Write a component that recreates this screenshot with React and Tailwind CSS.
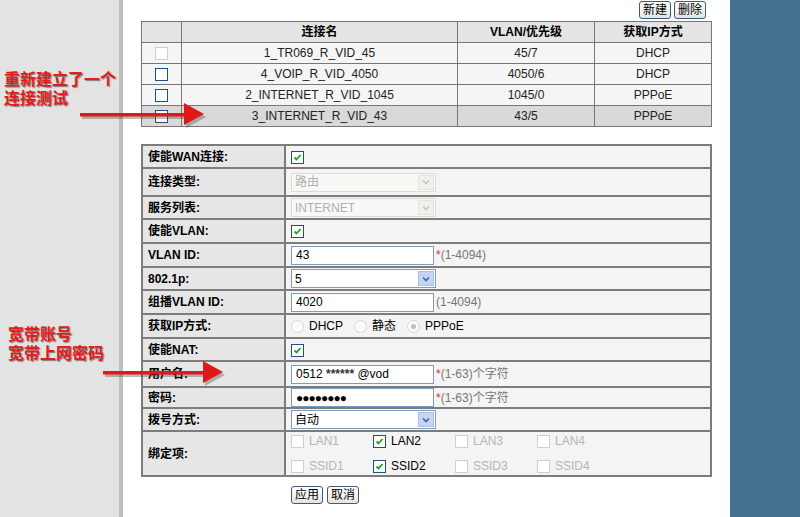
import React from 'react';

const FONT = { fontFamily: '"Liberation Sans", Arial, "Noto Sans CJK SC", sans-serif' };

const Box = ({ checked, disabled }) => (
  <span
    className={`inline-flex items-center justify-center w-[13px] h-[13px] border bg-white align-middle ${
      disabled ? 'border-[#cfcfcf]' : 'border-[#1c5180]'
    }`}
  >
    {checked && (
      <svg width="9" height="9" viewBox="0 0 9 9">
        <path d="M1.5 4.5 L3.5 6.5 L7.5 2" stroke="#21a121" strokeWidth="1.8" fill="none" />
      </svg>
    )}
  </span>
);

const Radio = ({ on }) => (
  <span className="inline-flex items-center justify-center w-[13px] h-[13px] rounded-full border border-[#d6d6d6] bg-[#fbfbfb] align-middle">
    {on && <span className="w-[5px] h-[5px] rounded-full bg-[#bdbdbd]" />}
  </span>
);

const TextInput = ({ value, w = 'w-[143px]' }) => (
  <div className={`${w} h-[19px] border border-[#7f9db9] bg-white px-[4px] flex items-center text-[12px] text-black`}>
    {value}
  </div>
);

const Select = ({ value, disabled }) => (
  <div
    className={`w-[145px] h-[19px] border flex items-stretch text-[12px] ${
      disabled ? 'border-[#dcdcd4] bg-[#f8f8f6] text-[#b0b0b0]' : 'border-[#7f9db9] bg-white text-black'
    }`}
  >
    <span className="flex-1 px-[3px] flex items-center">{value}</span>
    <span
      className={`w-[16px] m-[1px] flex items-center justify-center ${
        disabled ? 'bg-[#f0f0ec] border border-[#e4e4de]' : 'bg-[#c4d5fa] border border-[#a9bfe8]'
      }`}
    >
      <svg width="8" height="6" viewBox="0 0 8 6">
        <path d="M1 1.5 L4 4.5 L7 1.5" stroke={disabled ? '#c8c8c0' : '#4d6185'} strokeWidth="1.6" fill="none" />
      </svg>
    </span>
  </div>
);

const Btn = ({ children }) => (
  <button className="h-[18px] px-[3px] border border-[#3c5a7a] rounded-[3px] bg-gradient-to-b from-white to-[#e6e6e0] text-[12px] leading-none text-black">
    {children}
  </button>
);

const Hint = ({ star, text }) => (
  <span className="ml-[2px] text-[12px] text-[#777]">
    {star && <span className="text-[#e03030]">*</span>}
    {text}
  </span>
);

const connections = [
  { name: '1_TR069_R_VID_45', vlan: '45/7', ip: 'DHCP', disabled: true },
  { name: '4_VOIP_R_VID_4050', vlan: '4050/6', ip: 'DHCP' },
  { name: '2_INTERNET_R_VID_1045', vlan: '1045/0', ip: 'PPPoE' },
  { name: '3_INTERNET_R_VID_43', vlan: '43/5', ip: 'PPPoE', active: true },
];

const Row = ({ label, h, children }) => (
  <tr style={{ height: h }}>
    <td className="w-[143px] bg-[#e6e6e6] border-2 border-[#7c7c7c] pl-[5px] font-bold text-[12px] text-black">{label}</td>
    <td className="bg-[#f4f4f4] border-2 border-[#7c7c7c] pl-[5px] text-[12px]">{children}</td>
  </tr>
);

const Binding = ({ label, checked }) => (
  <span className="inline-flex items-center gap-[5px] w-[82px]">
    <Box checked={checked} disabled={!checked} />
    <span className={checked ? 'text-black' : 'text-[#b4b4b4]'}>{label}</span>
  </span>
);

const Arrow = ({ x, y, len }) => (
  <svg className="absolute" style={{ left: x, top: y - 12 }} width={len + 4} height="28" viewBox={`0 0 ${len + 4} 28`}>
    <g transform="translate(2,2)" opacity="0.35">
      <rect x="0" y="10" width={len - 18} height="4" fill="#444" />
      <polygon points={`${len - 20},1 ${len},12 ${len - 20},23`} fill="#444" />
    </g>
    <rect x="0" y="10" width={len - 18} height="3.5" fill="#e01818" />
    <polygon points={`${len - 20},0 ${len},11 ${len - 20},22`} fill="#e01818" />
  </svg>
);

// red hand-written notes laid over the screenshot
const Note = ({ x, y, lines }) => (
  <div
    className="absolute font-bold text-[16px] leading-[19px] text-[#e41c1c]"
    style={{
      left: x,
      top: y,
      fontFamily: '"Liberation Sans", "Noto Sans CJK SC", sans-serif',
      textShadow: '1px 1px 1px rgba(0,0,0,0.45)',
    }}
  >
    {lines.map((l) => (
      <div key={l}>{l}</div>
    ))}
  </div>
);

export default function App() {
  return (
    <div className="relative w-[800px] h-[517px] overflow-hidden flex bg-white" style={FONT}>
      <div className="w-[119px] bg-[#e3e3e3]" />
      <div className="w-[4px] bg-[#bdbdbd]" />
      <div className="w-[607px] bg-white pl-[18px]">
        <div className="w-[571px] h-[21px] flex items-start justify-end gap-[3px] pr-[6px] pt-[1px]">
          <Btn>新建</Btn>
          <Btn>删除</Btn>
        </div>
        <table className="w-[571px] border-collapse text-[12px] text-center">
          <thead>
            <tr className="h-[21px] bg-[#e4e4e4] font-bold">
              <th className="w-[40px] border border-[#777]" />
              <th className="w-[276px] border border-[#777]">连接名</th>
              <th className="w-[137px] border border-[#777]">VLAN/优先级</th>
              <th className="border border-[#777]">获取IP方式</th>
            </tr>
          </thead>
          <tbody>
            {connections.map((c) => (
              <tr key={c.name} className={`h-[21px] ${c.active ? 'bg-[#d9d9d9]' : 'bg-[#f5f5f5]'}`}>
                <td className="border border-[#777]">
                  <Box disabled={c.disabled} />
                </td>
                <td className="border border-[#777] text-[#222]">{c.name}</td>
                <td className="border border-[#777] text-[#222]">{c.vlan}</td>
                <td className="border border-[#777] text-[#222]">{c.ip}</td>
              </tr>
            ))}
          </tbody>
        </table>

        <table className="mt-[17px] w-[571px] border-collapse">
          <tbody>
            <Row label="使能WAN连接:" h={23}><Box checked /></Row>
            <Row label="连接类型:" h={28}><Select value="路由" disabled /></Row>
            <Row label="服务列表:" h={23}><Select value="INTERNET" disabled /></Row>
            <Row label="使能VLAN:" h={24}><Box checked /></Row>
            <Row label="VLAN ID:" h={24}>
              <div className="flex items-center"><TextInput value="43" /><Hint star text="(1-4094)" /></div>
            </Row>
            <Row label="802.1p:" h={23}><Select value="5" /></Row>
            <Row label="组播VLAN ID:" h={24}>
              <div className="flex items-center"><TextInput value="4020" /><Hint text="(1-4094)" /></div>
            </Row>
            <Row label="获取IP方式:" h={24}>
              <div className="flex items-center gap-[5px] text-[12px]">
                <Radio /><span className="text-black mr-[6px]">DHCP</span>
                <Radio /><span className="text-black mr-[6px]">静态</span>
                <Radio on /><span className="text-black">PPPoE</span>
              </div>
            </Row>
            <Row label="使能NAT:" h={23}><Box checked /></Row>
            <Row label="用户名:" h={26}>
              <div className="flex items-center">
                <TextInput value={<span>0512 <b className="text-[#333]">******</b> @vod</span>} />
                <Hint star text="(1-63)个字符" />
              </div>
            </Row>
            <Row label="密码:" h={21}>
              <div className="flex items-center">
                <TextInput value={<span className="tracking-[-1px] font-bold">●●●●●●●●</span>} />
                <Hint star text="(1-63)个字符" />
              </div>
            </Row>
            <Row label="拨号方式:" h={23}><Select value="自动" /></Row>
            <Row label="绑定项:" h={43}>
              <div className="flex flex-col gap-[7px] text-[12px]">
                <div className="flex">
                  <Binding label="LAN1" />
                  <Binding label="LAN2" checked />
                  <Binding label="LAN3" />
                  <Binding label="LAN4" />
                </div>
                <div className="flex">
                  <Binding label="SSID1" />
                  <Binding label="SSID2" checked />
                  <Binding label="SSID3" />
                  <Binding label="SSID4" />
                </div>
              </div>
            </Row>
          </tbody>
        </table>
        <div className="flex gap-[4px] pl-[150px] mt-[9px]">
          <Btn>应用</Btn>
          <Btn>取消</Btn>
        </div>
      </div>
      <div className="flex-1 bg-[#46708f]" />

      <Note x={4} y={70} lines={['重新建立了一个', '连接测试']} />
      <Arrow x={80} y={115} len={124} />
      <Note x={8} y={325} lines={['宽带账号', '宽带上网密码']} />
      <Arrow x={103} y={373} len={120} />
    </div>
  );
}
